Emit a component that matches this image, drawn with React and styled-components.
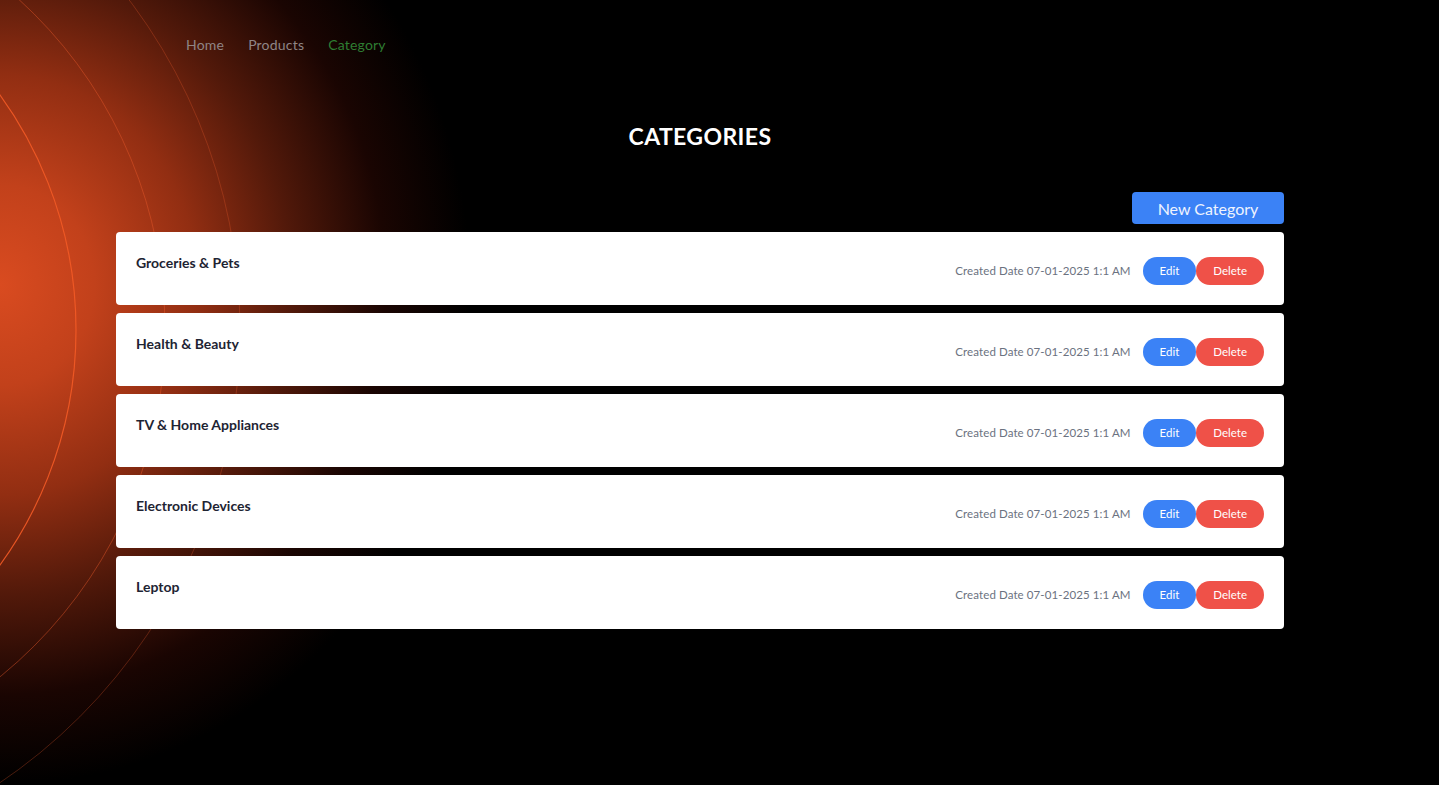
import React from "react";
import styled, { createGlobalStyle } from "styled-components";

// Global styles.
const GlobalStyle = createGlobalStyle`
	html, body {
		margin: 0;
		padding: 0;
		background: #000;
	}

	body {
		font-family: Lato, "Noto Sans", "Liberation Sans", sans-serif;
		-webkit-font-smoothing: antialiased;
	}
`;

// Styled components.
const Page = styled.div`
	position: relative;
	min-height: 785px;
	overflow: hidden;
	background:
		radial-gradient( ellipse 470px 500px at 0 285px,
			#d94b20 0%,
			#c2411b 20%,
			#922e12 42%,
			#52190a 62%,
			#1a0502 82%,
			#000 100% ),
		#000;
`;

const Rings = styled.svg`
	position: absolute;
	top: 0;
	left: 0;
	width: 700px;
	height: 785px;
	pointer-events: none;
`;

const Content = styled.div`
	position: relative;
	width: 1168px;
	margin-left: 116px;
	display: flex;
	flex-direction: column;
`;

const Nav = styled.nav`
	display: flex;
	gap: 24px;
	padding: 35px 0 0 70px;
	height: 19px;
`;

const NavLink = styled.a`
	font-size: 14px;
	line-height: 19px;
	letter-spacing: 0.2px;
	color: ${ props => props.active ? "#2e7d32" : "#8f8585" };
	text-decoration: none;
	cursor: pointer;
`;

const Title = styled.h1`
	margin: 67px 0 0;
	text-align: center;
	font-size: 23px;
	line-height: 30px;
	font-weight: 700;
	color: #fff;
	letter-spacing: 0.4px;
`;

const Toolbar = styled.div`
	display: flex;
	justify-content: flex-end;
	margin-top: 41px;
`;

const NewButton = styled.button`
	width: 152px;
	height: 32px;
	border: 0;
	border-radius: 4px;
	background: #3b82f6;
	color: #eef3fe;
	font-family: inherit;
	font-size: 16px;
	cursor: pointer;
`;

const List = styled.div`
	display: flex;
	flex-direction: column;
	gap: 8.5px;
	margin-top: 8px;
`;

const Card = styled.div`
	display: flex;
	justify-content: space-between;
	align-items: flex-end;
	height: 72.5px;
	box-sizing: border-box;
	padding: 20px 20px;
	background: #fff;
	border-radius: 4px;
`;

const Name = styled.div`
	align-self: flex-start;
	font-size: 14px;
	line-height: 22px;
	font-weight: 700;
	color: #1e2433;
`;

const Actions = styled.div`
	display: flex;
	align-items: center;
	height: 28px;
`;

const DateText = styled.span`
	margin-right: 12px;
	font-size: 11.5px;
	letter-spacing: 0.1px;
	color: #6b7280;
`;

const Pill = styled.button`
	height: 28px;
	padding: 0 17px;
	border: 0;
	border-radius: 14px;
	background: ${ props => props.danger ? "#ef5148" : "#3b82f6" };
	color: #fff;
	font-family: inherit;
	font-size: 11.5px;
	cursor: pointer;
`;

// Data.
const categories = [
	"Groceries & Pets",
	"Health & Beauty",
	"TV & Home Appliances",
	"Electronic Devices",
	"Leptop",
];

/**
 * Decorative rings at the left of the page.
 */
const BackgroundRings = () => (
	<Rings viewBox="0 0 700 785">
		<circle cx="-325" cy="330" r="401" fill="none" stroke="#f25a26" strokeWidth="1.2" opacity="0.9" />
		<circle cx="-282" cy="330" r="447" fill="none" stroke="#e8582a" strokeWidth="1" opacity="0.45" />
		<circle cx="-307" cy="330" r="547" fill="none" stroke="#e8582a" strokeWidth="1" opacity="0.3" />
	</Rings>
);

/**
 * Category overview page.
 */
export default function App() {
	return (
		<Page>
			<GlobalStyle />
			<BackgroundRings />
			<Content>
				<Nav>
					<NavLink>Home</NavLink>
					<NavLink>Products</NavLink>
					<NavLink active>Category</NavLink>
				</Nav>

				<Title>CATEGORIES</Title>

				<Toolbar>
					<NewButton type="button">New Category</NewButton>
				</Toolbar>

				<List>
					{ categories.map( name => (
						<Card key={ name }>
							<Name>{ name }</Name>
							<Actions>
								<DateText>Created Date 07-01-2025 1:1 AM</DateText>
								<Pill type="button">Edit</Pill>
								<Pill type="button" danger>Delete</Pill>
							</Actions>
						</Card>
					) ) }
				</List>
			</Content>
		</Page>
	);
}
